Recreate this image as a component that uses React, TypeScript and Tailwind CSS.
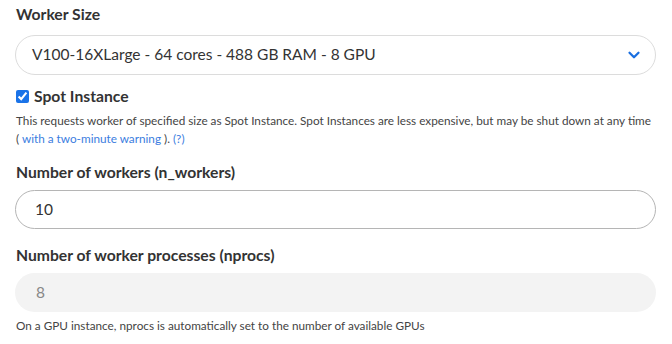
import { ChevronDown } from "lucide-react";

export default function App() {
  return (
    <div className="min-h-screen bg-white px-4 pt-1 font-['Lato',sans-serif] text-[#333]">
      <label className="block text-[15.7px] font-bold leading-5 text-[#333]">Worker Size</label>

      <div className="mt-[11px] flex h-10 w-[641px] -ml-px items-center justify-between rounded-full border border-[#dcdcdc] bg-white pl-4 pr-3">
        <span className="text-[15.5px] text-[#333]">V100-16XLarge - 64 cores - 488 GB RAM - 8 GPU</span>
        <ChevronDown size={18} strokeWidth={3} className="text-[#1a6fe0]" />
      </div>

      <div className="mt-[11px] flex items-center gap-[5px]">
        <input type="checkbox" defaultChecked className="m-0 h-[13px] w-[13px] accent-[#1a73e8]" />
        <span className="text-[15.7px] font-bold leading-5">Spot Instance</span>
      </div>

      <p className="mt-[6px] text-[11.75px] leading-[18px] text-[#444]">
        This requests worker of specified size as Spot Instance. Spot Instances are less expensive, but may be shut down at any time
        <br />( <span className="text-[#3b7de0]">with a two-minute warning</span> ). <span className="text-[#3b7de0]">(?)</span>
      </p>

      <label className="mt-[14px] block text-[15.7px] font-bold leading-5">Number of workers (n_workers)</label>

      <div className="mt-2 -ml-px flex h-[39px] w-[641px] items-center rounded-full border border-[#b5b5b5] bg-white pl-[19px]">
        <span className="text-[15.5px] text-[#333]">10</span>
      </div>

      <label className="mt-[16px] block text-[15.7px] font-bold leading-5">Number of worker processes (nprocs)</label>

      <div className="mt-2 -ml-px flex h-[39px] w-[641px] items-center rounded-full bg-[#f3f3f3] pl-[21px]">
        <span className="text-[15.5px] text-[#888]">8</span>
      </div>

      <p className="mt-[5px] text-[11.75px] leading-[18px] text-[#444]">
        On a GPU instance, nprocs is automatically set to the number of available GPUs
      </p>
    </div>
  );
}
